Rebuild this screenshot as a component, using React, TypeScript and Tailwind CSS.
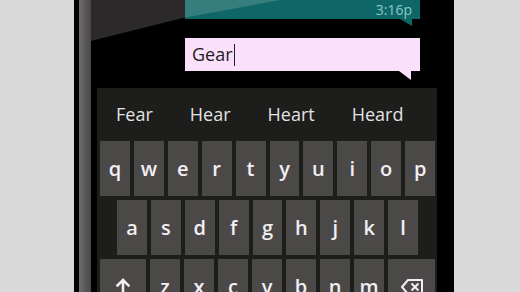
import React from "react";

const row1 = ["q", "w", "e", "r", "t", "y", "u", "i", "o", "p"];
const row2 = ["a", "s", "d", "f", "g", "h", "j", "k", "l"];
const row3 = ["z", "x", "c", "v", "b", "n", "m"];
const suggestions = ["Fear", "Hear", "Heart", "Heard"];

function Key({ label, className = "" }: { label: React.ReactNode; className?: string }) {
  return (
    <div
      className={`flex h-full items-center justify-center bg-[#4a4948] text-[20px] font-semibold leading-none text-[#f2eef2] ${className}`}
    >
      {label}
    </div>
  );
}

function ShiftIcon() {
  return (
    <svg width="16" height="20" viewBox="0 0 16 20" fill="none" stroke="#f2eef2" strokeWidth="2.6" strokeLinecap="square">
      <path d="M8 3v16M2.5 8.5L8 3l5.5 5.5" />
    </svg>
  );
}

function BackspaceIcon() {
  return (
    <svg width="24" height="18" viewBox="0 0 24 18" fill="none" stroke="#f2eef2" strokeWidth="2" strokeLinejoin="round">
      <path d="M8 2h14v14H8L2 9z" />
      <path d="M11.5 5.5l7 7M18.5 5.5l-7 7" />
    </svg>
  );
}

export default function App() {
  return (
    <div className="flex h-[292px] w-[520px] overflow-hidden bg-[#d9d9d9] font-['Open_Sans',sans-serif]">
      <div className="w-[74px] shrink-0" />
      <div className="flex w-[380px] shrink-0 bg-black">
        <div className="w-[5px]" />
        <div className="w-[12px] bg-gradient-to-r from-[#6f6d6d] via-[#5a5858] to-[#4a4848]" />
        <div className="relative flex flex-1 flex-col">
          {/* conversation */}
          <div className="h-[88px] shrink-0 pl-[94px]">
            <div className="w-[235px]">
              <div className="flex h-[19px] items-end justify-end bg-[#0e6666] pr-[8px] text-[14px] leading-[18px] text-[#8ccaca]">
                3:16p
              </div>
              <svg width="235" height="7" className="block">
                <polygon points="215,0 227,0 227,7" fill="#0e6666" />
              </svg>
              <div className="mt-[12px] flex h-[33px] items-center bg-[#fae0fa] pl-[7px] text-[18px] text-[#241a24]">
                <span>Gear</span>
                <span className="ml-[1px] h-[22px] w-[1.5px] bg-[#241a24]" />
              </div>
              <svg width="235" height="9" className="block">
                <polygon points="214,0 226,0 226,9" fill="#fae0fa" />
              </svg>
            </div>
          </div>

          {/* keyboard */}
          <div className="ml-[6px] flex w-[340px] shrink-0 flex-col bg-[#1d1d1b] pb-[40px] pl-[3px] pr-[2px]">
            <div className="flex h-[53px] items-center gap-[37px] pl-[16px] text-[18px] text-[#e4e2e2]">
              {suggestions.map((s) => (
                <span key={s}>{s}</span>
              ))}
            </div>
            <div className="flex flex-col gap-[4px]">
              <div className="flex h-[55px] gap-[4px]">
                {row1.map((k) => (
                  <Key key={k} label={k} className="flex-1" />
                ))}
              </div>
              <div className="flex h-[55px] gap-[4px] px-[17px]">
                {row2.map((k) => (
                  <Key key={k} label={k} className="flex-1" />
                ))}
              </div>
              <div className="flex h-[55px] gap-[4px]">
                <Key label={<ShiftIcon />} className="w-[46px]" />
                {row3.map((k) => (
                  <Key key={k} label={k} className="flex-1" />
                ))}
                <Key label={<BackspaceIcon />} className="w-[47px]" />
              </div>
            </div>
          </div>

          {/* screen glare */}
          <svg className="pointer-events-none absolute left-0 top-0" width="200" height="44">
            <polygon points="0,0 0,41 92,18 189,0" fill="#fff4f4" fillOpacity="0.17" />
          </svg>
        </div>
      </div>
    </div>
  );
}
